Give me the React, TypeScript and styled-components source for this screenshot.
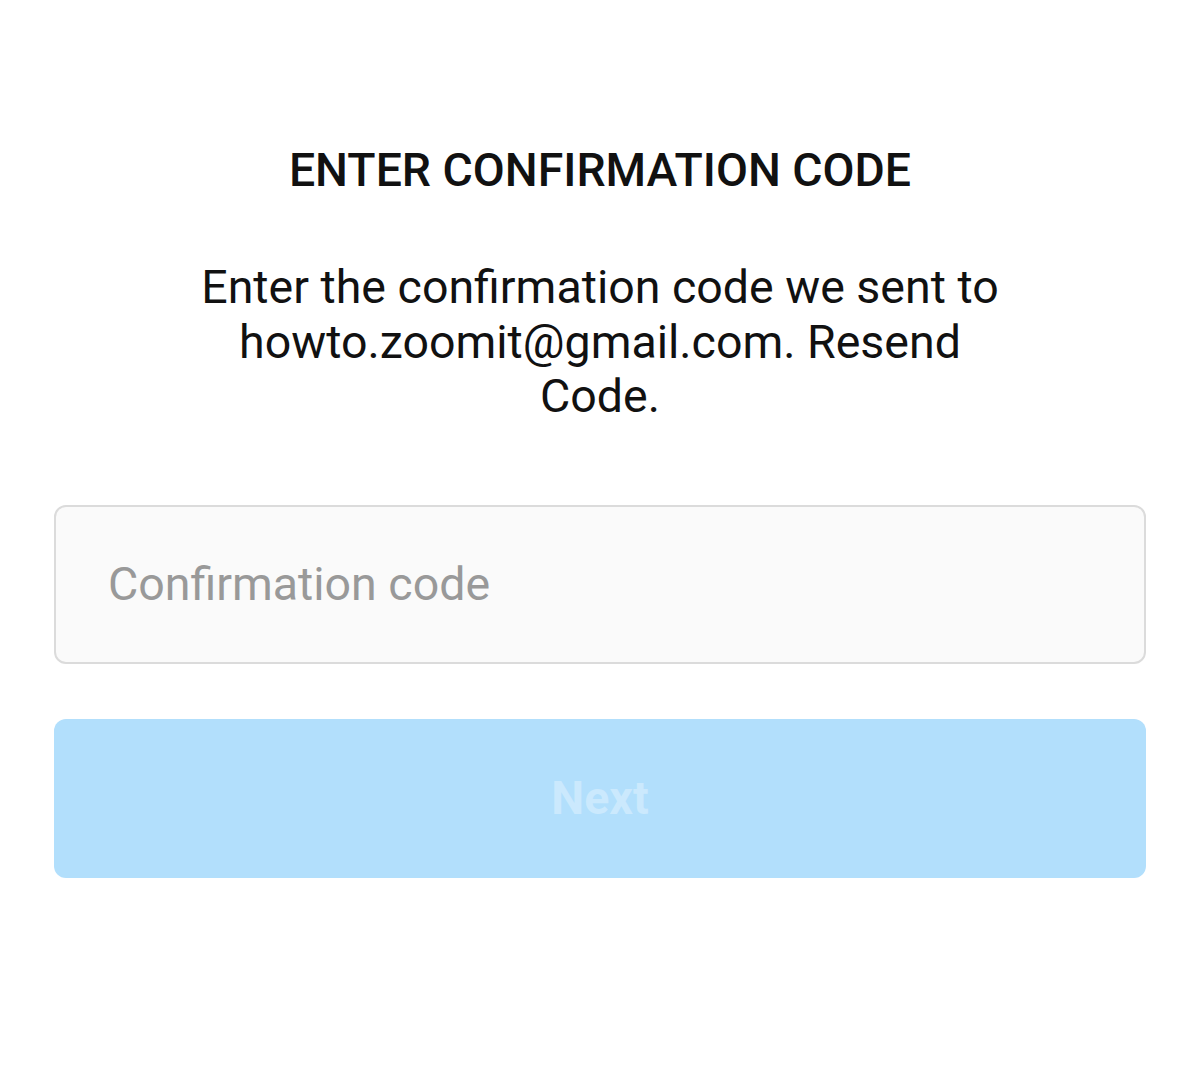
import React from 'react';
import styled, { createGlobalStyle } from 'styled-components';

const GlobalStyle = createGlobalStyle`
  html, body {
    margin: 0;
    padding: 0;
    background: #ffffff;
  }
  body {
    font-family: Roboto, "Liberation Sans", sans-serif;
    color: #111111;
  }
`;

const Page = styled.div`
  width: 1200px;
  height: 1076px;
  box-sizing: border-box;
  padding: 140px 54px 0;
  display: flex;
  flex-direction: column;
  align-items: stretch;
`;

const Title = styled.h1`
  margin: 0;
  text-align: center;
  font-size: 46.4px;
  font-weight: 500;
  line-height: 60px;
  color: #111;
`;

const Message = styled.p`
  margin: 60px auto 0;
  max-width: 820px;
  text-align: center;
  font-size: 46.5px;
  font-weight: 400;
  line-height: 54.5px;
  color: #111;
`;

const Field = styled.input`
  margin-top: 81px;
  height: 159px;
  box-sizing: border-box;
  border: 2px solid #dbdbdb;
  border-radius: 12px;
  background: #fafafa;
  padding: 0 52px;
  font-family: Roboto, "Liberation Sans", sans-serif;
  font-size: 46.5px;
  color: #262626;
  outline: none;

  &::placeholder {
    color: #999999;
  }
`;

const NextButton = styled.button`
  margin-top: 55px;
  height: 159px;
  border: none;
  border-radius: 12px;
  background: #b2dffc;
  color: #cbe9fd;
  font-family: Roboto, "Liberation Sans", sans-serif;
  font-size: 46.5px;
  font-weight: 700;
  cursor: default;
`;

const App = () => (
    <>
        <GlobalStyle />
        <Page>
            <Title>ENTER CONFIRMATION CODE</Title>
            <Message>
                Enter the confirmation code we sent to howto.zoomit@gmail.com. Resend Code.
            </Message>
            <Field type="text" placeholder="Confirmation code" />
            <NextButton disabled>Next</NextButton>
        </Page>
    </>
);

export default App;
